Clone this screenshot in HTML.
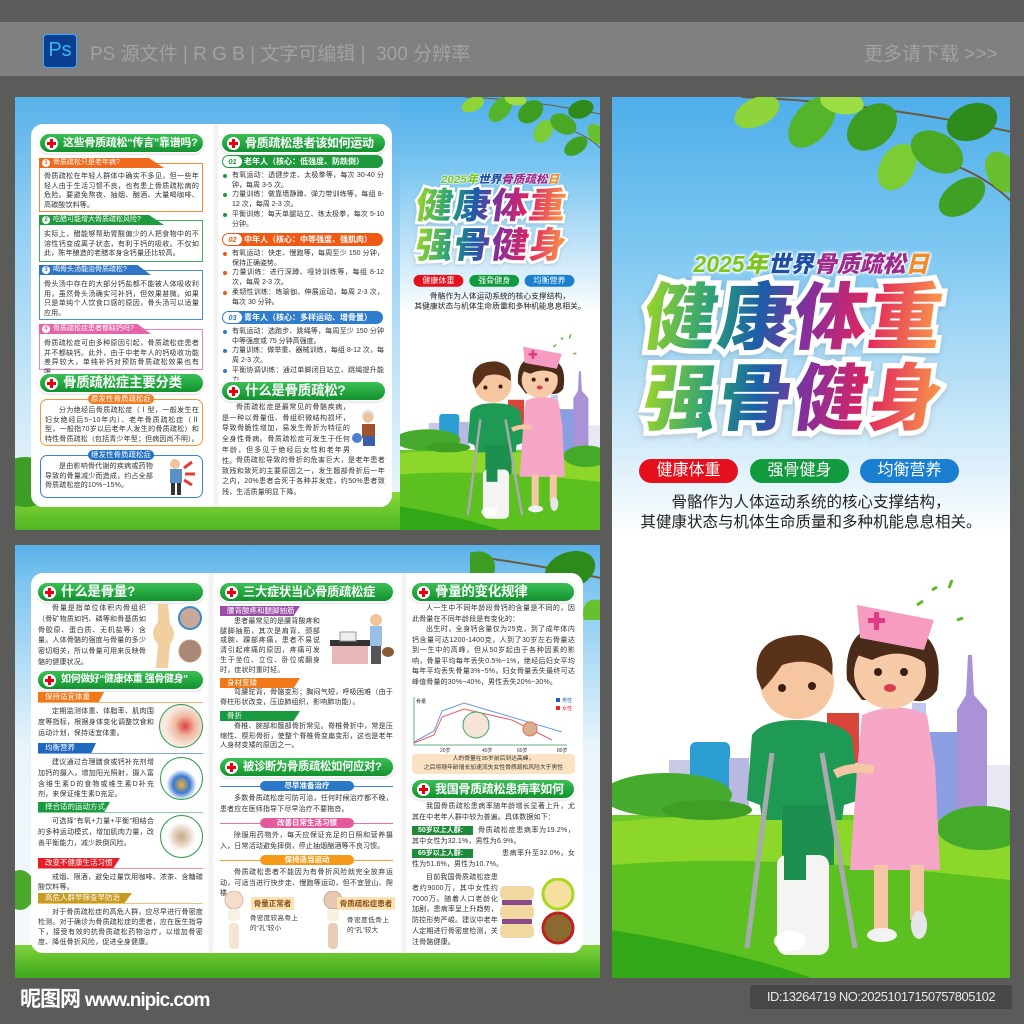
<!DOCTYPE html>
<html><head><meta charset="utf-8">
<style>
*{margin:0;padding:0;box-sizing:border-box}
body{width:1024px;height:1024px;background:#5b5b5a;position:relative;overflow:hidden;font-family:"Liberation Sans","Noto Sans CJK SC",sans-serif}
.a{position:absolute}
.t{position:absolute;font-size:7px;line-height:9.7px;color:#333;text-align:justify;letter-spacing:.15px}
.t p{text-indent:2em}
.hd{position:absolute;height:18px;border-radius:9px;background:linear-gradient(#3bbf55,#12912f);color:#fff;font-weight:bold;font-size:13px;line-height:18px;padding-left:23px;box-shadow:0 0 0 1.5px #fff,0 1px 2px 1.5px rgba(0,0,0,.15);white-space:nowrap;overflow:hidden;letter-spacing:-.3px}
.x{position:absolute;left:5px;top:2.5px;width:13px;height:13px;border-radius:50%;background:#fff}
.x:before,.x:after{content:"";position:absolute;background:#e60012}
.x:before{left:5px;top:2px;width:3px;height:9px}
.x:after{left:2px;top:5px;width:9px;height:3px}
.box{position:absolute;background:#fff;border:1.5px solid}
.tab{position:absolute;height:10px;color:#fff;font-size:7px;line-height:10px;padding-left:14px;clip-path:polygon(0 0,88% 0,100% 100%,0 100%);white-space:nowrap}
.tab b{position:absolute;left:3px;top:1px;width:8px;height:8px;border-radius:50%;background:#fff;font-size:6px;line-height:8px;text-align:center}
.bar{position:absolute;height:13px;border-radius:7px;color:#fff;font-size:8px;line-height:13px;padding-left:22px;white-space:nowrap;font-weight:bold}
.bar i{position:absolute;left:1px;top:1px;width:19px;height:11px;border-radius:6px;background:#fff;font-size:7.5px;line-height:11px;text-align:center;font-style:italic}
.ul{position:absolute;font-size:7px;line-height:9.7px;color:#333;text-align:justify}
.ul div{padding-left:10px;position:relative}
.ul div:before{content:"";position:absolute;left:1px;top:3px;width:4px;height:4px;border-radius:50%;background:var(--c)}
.st{position:absolute;height:10px;color:#fff;font-size:7.5px;line-height:10px;padding-left:7px;clip-path:polygon(0 0,100% 0,92% 100%,0 100%);white-space:nowrap}
.sl{position:absolute;height:1px}
.cp{position:absolute;height:10px;border-radius:5px;color:#fff;font-size:8px;line-height:10px;text-align:center}
.pl{position:absolute;height:10px;border-radius:5px;color:#fff;font-size:7.5px;line-height:10px;text-align:center;font-weight:bold}
.cov{position:absolute;width:398px;height:881px;overflow:hidden;background:linear-gradient(180deg,#4eaee9 0,#7cc7f1 150px,#c7e6f8 320px,#fff 440px,#fff 900px)}
.sub{position:absolute;left:0;width:398px;top:148px;text-align:center;font-size:23px;font-weight:900;font-style:italic;text-shadow:0 0 3px #fff,0 0 3px #fff,0 0 3px #fff,0 0 3px #fff;white-space:nowrap}
.big{position:absolute;left:32px;font-size:73px;font-weight:900;line-height:80px;white-space:nowrap;letter-spacing:2px;transform:skewX(-8deg)}
.big .o{position:absolute;left:0;top:0;color:#fff;-webkit-text-stroke:10px #fff;filter:drop-shadow(0 2px 3px rgba(0,0,0,.15))}
.big .g{position:relative;background:linear-gradient(90deg,#9ad52a 0%,#2aa07a 22%,#1c5fa8 38%,#8a2e9a 55%,#e0255e 75%,#fb9e48 100%);-webkit-background-clip:text;background-clip:text;color:transparent}
.pill{position:absolute;top:362px;height:24px;width:99px;border-radius:12px;color:#fff;font-size:16px;line-height:24px;text-align:center}
.cl{position:absolute;left:0;width:398px;text-align:center;font-size:15.5px;color:#222;line-height:20px}
</style></head><body>

<svg width="0" height="0" style="position:absolute">
<defs>
<symbol id="ill" viewBox="0 0 398 418">
 <rect x="0" y="255" width="398" height="163" fill="#6cc928"/>
 <path d="M0 262 Q120 250 260 262 L398 270 L398 418 L0 418Z" fill="#8dd62a"/>
 <path d="M0 305 Q150 292 398 320 L398 418 L0 418Z" fill="#5cc020"/>
 <path d="M0 370 Q120 390 200 418 L0 418Z" fill="#32a818"/>
 <rect x="57" y="200" width="22" height="50" fill="#c9c9e6"/>
 <rect x="78" y="182" width="40" height="66" rx="6" fill="#2b9fd2"/>
 <rect x="117" y="198" width="20" height="50" fill="#b8b8e0"/>
 <rect x="215" y="153" width="32" height="50" fill="#d8453a"/>
 <rect x="300" y="143" width="14" height="110" fill="#c0c8f0"/>
 <rect x="313" y="172" width="33" height="88" fill="#8c9ee2"/>
 <path d="M356 95 L360 95 L362 135 L375 150 L375 258 L345 258 L345 150 L354 135Z" fill="#a993d6"/>
 <rect x="375" y="205" width="23" height="50" fill="#e8e8f2"/>
 <ellipse cx="55" cy="235" rx="65" ry="22" fill="#46ab2c"/>
 <ellipse cx="95" cy="250" rx="45" ry="10" fill="#3e9e26"/>
 <ellipse cx="370" cy="268" rx="45" ry="22" fill="#44aa2a"/>
 <path d="M140 175 Q150 160 185 160 Q230 160 240 178 L248 240 L232 245 L230 260 L150 260 L148 245 L135 240Z" fill="#1f9a55"/>
 <rect x="170" y="245" width="52" height="60" fill="#1d8f4e"/>
 <rect x="165" y="295" width="52" height="100" rx="10" fill="#f4f4f2"/>
 <ellipse cx="178" cy="381" rx="16" ry="10" fill="#fff"/>
 <rect x="172" y="250" width="22" height="70" fill="#1d8f4e"/>
 <circle cx="185" cy="122" r="37" fill="#f6c6a0"/>
 <path d="M145 118 Q140 75 190 75 Q225 80 220 115 Q200 95 170 105 Q160 120 150 130Z" fill="#5a3219"/>
 <circle cx="170" cy="128" r="4" fill="#3a1f10"/><circle cx="200" cy="126" r="4" fill="#3a1f10"/>
 <line x1="160" y1="193" x2="135" y2="388" stroke="#a9a9b0" stroke-width="5"/>
 <line x1="210" y1="193" x2="243" y2="388" stroke="#a9a9b0" stroke-width="5"/>
 <path d="M250 155 Q285 140 315 155 L323 205 L328 310 L238 310 L245 210Z" fill="#f5a5c6"/>
 <rect x="262" y="305" width="14" height="65" fill="#f4c6a4"/><rect x="298" y="305" width="14" height="55" fill="#f4c6a4"/>
 <ellipse cx="270" cy="375" rx="15" ry="7" fill="#f2f2f2"/><ellipse cx="307" cy="365" rx="8" ry="14" fill="#e6e6ea"/>
 <path d="M235 120 Q230 60 285 65 Q335 70 325 130 Q315 145 300 140 L250 140Z" fill="#4a2a18"/>
 <ellipse cx="278" cy="113" rx="36" ry="36" fill="#f7cba8"/>
 <path d="M245 95 Q260 72 300 78 Q318 90 316 105 Q290 85 260 100Z" fill="#4a2a18"/>
 <path d="M245 45 L322 60 L312 90 L248 78Z" fill="#f59cc0"/>
 <rect x="262" y="52" width="5" height="18" fill="#e03a82"/><rect x="256" y="58" width="17" height="5" fill="#e03a82"/>
 <circle cx="266" cy="112" r="4" fill="#3a1f10"/><circle cx="292" cy="112" r="4" fill="#3a1f10"/>
 <ellipse cx="278" cy="128" rx="6" ry="4" fill="#d84050"/>
 <path d="M223 214 Q240 205 262 210" stroke="#f4c6a4" stroke-width="9" fill="none"/>
 <path d="M305 45 l6 -4 M320 30 l5 -3 M340 20 l-3 8 M345 60 l6 -2" stroke="#5cb82a" stroke-width="3"/>
</symbol>
<symbol id="leaf" viewBox="0 0 290 150">
 <path d="M20 5 Q150 10 290 40" stroke="#6b5a3a" stroke-width="2" fill="none"/>
 <path d="M180 60 Q250 70 290 110" stroke="#6b5a3a" stroke-width="2" fill="none"/>
 <ellipse cx="35" cy="20" rx="24" ry="14" fill="#8fd43a" transform="rotate(-25 35 20)"/>
 <ellipse cx="90" cy="30" rx="30" ry="18" fill="#54b52a" transform="rotate(-50 90 30)"/>
 <ellipse cx="150" cy="35" rx="28" ry="20" fill="#3d9c22" transform="rotate(-40 150 35)"/>
 <ellipse cx="175" cy="75" rx="25" ry="17" fill="#7bcc35" transform="rotate(-60 175 75)"/>
 <ellipse cx="215" cy="60" rx="28" ry="19" fill="#4aa824" transform="rotate(30 215 60)"/>
 <ellipse cx="250" cy="30" rx="26" ry="18" fill="#2f8a1c" transform="rotate(-20 250 30)"/>
 <ellipse cx="240" cy="105" rx="26" ry="16" fill="#3fa023" transform="rotate(-35 240 105)"/>
 <ellipse cx="280" cy="80" rx="22" ry="15" fill="#68c02e" transform="rotate(60 280 80)"/>
 <ellipse cx="120" cy="10" rx="22" ry="12" fill="#9ede45" transform="rotate(10 120 10)"/>
</symbol>
</defs></svg>

<div class="a" style="left:0;top:22px;width:1024px;height:54px;background:#808080"></div>
<div class="a" style="left:43px;top:34px;width:34px;height:34px;border-radius:4px;background:#0a3e8e;border:1.5px solid #36a8ff;color:#3fb2ff;font-size:20px;line-height:30px;text-align:center">Ps</div>
<div class="a" style="left:90px;top:39px;font-size:19px;color:#a2a2a2;white-space:nowrap">PS 源文件 | R G B | 文字可编辑 |&nbsp; 300 分辨率</div>
<div class="a" style="left:864px;top:39px;font-size:19px;color:#a2a2a2;white-space:nowrap">更多请下载 &gt;&gt;&gt;</div>

<!-- TOP-LEFT PANEL -->
<div class="a" style="left:15px;top:97px;width:585px;height:433px;overflow:hidden;background:linear-gradient(180deg,#58b2ea 0,#8fcdf2 120px,#d4ecfa 330px,#e8f4fb 400px,#7ccf38 430px,#3fae1c 433px)">
 <div class="a" style="left:0;top:395px;width:585px;height:40px;background:linear-gradient(#8ad83a,#4cb422)"></div>
 <div class="a" style="left:-20px;top:360px;width:60px;height:50px;border-radius:50%;background:#3c9e24"></div>
</div>
<div class="a" style="left:31px;top:124px;width:361px;height:383px;border-radius:12px;background:#fff"></div>
<div class="a" style="left:212px;top:124px;width:8px;height:383px;background:linear-gradient(90deg,#fff,#efefef,#fff)"></div>

<div class="hd" style="left:40px;top:134px;width:163px;font-size:11px"><i class="x"></i>这些骨质疏松“传言”靠谱吗?</div>

<div class="box" style="left:39px;top:163px;width:164px;height:49px;border-color:#f28b3a"></div>
<div class="tab" style="left:39px;top:158px;width:125px;background:#ef6a1c"><b style="color:#ef6a1c">1</b>骨质疏松只是老年病?</div>
<div class="t" style="left:44px;top:172px;width:155px">骨质疏松在年轻人群体中确实不多见，但一些年轻人由于生活习惯不良，也有患上骨质疏松病的危险。要避免熬夜、抽烟、酗酒、大量喝咖啡、高碳酸饮料等。</div>

<div class="box" style="left:39px;top:220px;width:164px;height:42px;border-color:#3fb25a"></div>
<div class="tab" style="left:39px;top:215px;width:125px;background:#1f9b3d"><b style="color:#1f9b3d">2</b>吃醋可能增大骨质疏松风险?</div>
<div class="t" style="left:44px;top:230px;width:155px">实际上，醋能够帮助胃酸偏少的人把食物中的不溶性钙变成离子状态，有利于钙的吸收。不仅如此，陈年酿造的老醋本身含钙量还比较高。</div>

<div class="box" style="left:39px;top:270px;width:164px;height:50px;border-color:#4a8fd8"></div>
<div class="tab" style="left:39px;top:265px;width:112px;background:#2f75c6"><b style="color:#2f75c6">3</b>喝骨头汤能治骨质疏松?</div>
<div class="t" style="left:44px;top:280px;width:155px">骨头汤中存在的大部分钙盐都不能被人体吸收利用，虽然骨头汤确实可补钙，但效果甚微。如果只是单纯个人饮食口感的原因，骨头汤可以适量应用。</div>

<div class="box" style="left:39px;top:329px;width:164px;height:41px;border-color:#ee82b8"></div>
<div class="tab" style="left:39px;top:324px;width:112px;background:#e566a8"><b style="color:#e566a8">4</b>骨质疏松症患者都缺钙吗?</div>
<div class="t" style="left:44px;top:339px;width:155px">骨质疏松症可由多种原因引起，骨质疏松症患者并不都缺钙。此外，由于中老年人的钙吸收功能差异较大，单纯补钙对预防骨质疏松效果也有限。</div>

<div class="hd" style="left:40px;top:374px;width:163px;font-size:13.5px"><i class="x"></i>骨质疏松症主要分类</div>
<div class="box" style="left:40px;top:399px;width:163px;height:47px;border-color:#f5963a;border-radius:7px"></div>
<div class="cp" style="left:88px;top:394px;width:66px;background:#f07d22;font-size:7.5px">原发性骨质疏松症</div>
<div class="t" style="left:45px;top:406px;width:154px"><p>分为绝经后骨质疏松症（Ⅰ型，一般发生在妇女绝经后5~10年内）、老年骨质疏松症（Ⅱ型，一般指70岁以后老年人发生的骨质疏松）和特性骨质疏松（包括青少年型；但病因尚不明）。</p></div>
<div class="box" style="left:40px;top:455px;width:163px;height:43px;border-color:#3a84d2;border-radius:7px"></div>
<div class="cp" style="left:88px;top:450px;width:66px;background:#1f6fc4;font-size:7.5px">继发性骨质疏松症</div>
<div class="t" style="left:45px;top:462px;width:108px"><p>是由影响骨代谢的疾病或药物导致的骨量减少而造成，约占全部骨质疏松症的10%~15%。</p></div>
<svg class="a" style="left:160px;top:456px" width="36" height="40"><circle cx="15" cy="8" r="5" fill="#f0c49a"/><rect x="10" y="13" width="12" height="14" fill="#5b8fc8"/><rect x="11" y="27" width="4" height="12" fill="#333"/><rect x="17" y="27" width="4" height="12" fill="#333"/><path d="M24 12 l8 -6 M25 18 l10 0 M24 24 l8 5" stroke="#e83a3a" stroke-width="3"/></svg>

<div class="hd" style="left:222px;top:134px;width:163px;font-size:12px"><i class="x"></i>骨质疏松患者该如何运动</div>
<div class="bar" style="left:222px;top:155px;width:161px;background:#1e9a3c"><i style="color:#1e9a3c">01</i>老年人（核心：低强度、防跌倒）</div>
<div class="ul" style="left:222px;top:171px;width:162px;--c:#1e9a3c">
<div>有氧运动：透健步走、太极拳等，每次 30-40 分钟，每周 3-5 次。</div>
<div>力量训练：做靠墙静蹲、弹力带训练等，每组 8-12 次，每周 2-3 次。</div>
<div>平衡训练：每天单腿站立、练太极拳，每次 5-10 分钟。</div></div>
<div class="bar" style="left:222px;top:233px;width:161px;background:#ef5a14"><i style="color:#ef5a14">02</i>中年人（核心：中等强度、强肌肉）</div>
<div class="ul" style="left:222px;top:249px;width:162px;--c:#ef5a14">
<div>有氧运动：快走、慢跑等，每周至少 150 分钟，保持正确姿势。</div>
<div>力量训练：进行深蹲、哑铃训练等，每组 8-12 次，每周 2-3 次。</div>
<div>柔韧性训练：练瑜伽、伸展运动，每周 2-3 次，每次 30 分钟。</div></div>
<div class="bar" style="left:222px;top:311px;width:161px;background:#2f7dcc"><i style="color:#2f7dcc">03</i>青年人（核心：多样运动、增骨量）</div>
<div class="ul" style="left:222px;top:327px;width:162px;--c:#2f7dcc">
<div>有氧运动：选跑步、跳绳等，每周至少 150 分钟中等强度或 75 分钟高强度。</div>
<div>力量训练：做举重、器械训练，每组 8-12 次，每周 2-3 次。</div>
<div>平衡协调训练：通过单脚闭目站立、跳绳提升能力。</div></div>
<div class="hd" style="left:222px;top:382px;width:163px;font-size:13.5px"><i class="x"></i>什么是骨质疏松?</div>
<div class="t" style="left:222px;top:403px;width:128px;line-height:10.7px"><p>骨质疏松症是最常见的骨骼疾病，是一种以骨量低、骨组织微结构损坏，导致骨脆性增加，易发生骨折为特征的全身性骨病。骨质疏松症可发生于任何年龄，但多见于绝经后女性和老年男性。</p></div>
<svg class="a" style="left:350px;top:408px" width="36" height="44"><circle cx="18" cy="8" r="6" fill="#ddd"/><circle cx="18" cy="10" r="5" fill="#f0c49a"/><rect x="12" y="16" width="13" height="14" fill="#a0522d"/><rect x="13" y="28" width="12" height="10" fill="#3a5fa8"/><circle cx="7" cy="30" r="5" fill="#4a7fd0"/></svg>
<div class="t" style="left:222px;top:456px;width:163px;line-height:10.7px"><p>骨质疏松导致的骨折的危害巨大，是老年患者致残和致死的主要原因之一，发生髋部骨折后一年之内，20%患者会死于各种并发症，约50%患者致残，生活质量明显下降。</p></div>

<div class="a" style="left:400px;top:97px;width:200px;height:433px;overflow:hidden">
 <div style="transform:scale(.5025,.4915);transform-origin:0 0;position:absolute;left:0;top:0">
  <div class="cov" style="left:0;top:0">
   <svg class="a" style="left:110px;top:-5px" width="290" height="150"><use href="#leaf"/></svg>
   <div class="sub"><span style="color:#7cc520">2025年</span><span style="color:#1f4fa5">世界</span><span style="color:#9c2b8c">骨质疏松</span><span style="color:#f28c28">日</span></div>
   <div class="big" style="top:182px"><span class="o">健康体重</span><span class="g">健康体重</span></div>
   <div class="big" style="top:263px"><span class="o">强骨健身</span><span class="g">强骨健身</span></div>
   <div class="pill" style="left:27px;background:#e4101e">健康体重</div>
   <div class="pill" style="left:138px;background:#119a3e">强骨健身</div>
   <div class="pill" style="left:248px;background:#1a7fd0">均衡营养</div>
   <div class="cl" style="top:396px">骨骼作为人体运动系统的核心支撑结构，</div>
   <div class="cl" style="top:416px">其健康状态与机体生命质量和多种机能息息相关。</div>
   <svg class="a" style="left:0;top:463px" width="398" height="418"><use href="#ill"/></svg>
  </div>
 </div>
</div>

<!-- RIGHT COVER -->
<div class="cov" style="left:612px;top:97px">
 <svg class="a" style="left:110px;top:-5px" width="290" height="150"><use href="#leaf"/></svg>
 <div class="sub"><span style="color:#7cc520">2025年</span><span style="color:#1f4fa5">世界</span><span style="color:#9c2b8c">骨质疏松</span><span style="color:#f28c28">日</span></div>
 <div class="big" style="top:182px"><span class="o">健康体重</span><span class="g">健康体重</span></div>
 <div class="big" style="top:263px"><span class="o">强骨健身</span><span class="g">强骨健身</span></div>
 <div class="pill" style="left:27px;background:#e4101e">健康体重</div>
 <div class="pill" style="left:138px;background:#119a3e">强骨健身</div>
 <div class="pill" style="left:248px;background:#1a7fd0">均衡营养</div>
 <div class="cl" style="top:396px">骨骼作为人体运动系统的核心支撑结构，</div>
 <div class="cl" style="top:416px">其健康状态与机体生命质量和多种机能息息相关。</div>
 <svg class="a" style="left:0;top:463px" width="398" height="418"><use href="#ill"/></svg>
</div>

<!-- BOTTOM-LEFT PANEL -->
<div class="a" style="left:15px;top:545px;width:585px;height:433px;overflow:hidden;background:linear-gradient(180deg,#5ab2ea 0,#7fc6f0 40px,#e8f4fb 200px,#f4f9fc 380px)">
 <div class="a" style="left:0;top:400px;width:585px;height:33px;background:linear-gradient(#7fd23a,#3ca81c)"></div>
 <div class="a" style="left:-10px;top:325px;width:30px;height:40px;border-radius:50%;background:#4aa82a"></div>
 <svg class="a" style="left:455px;top:-5px" width="140" height="80" viewBox="150 0 140 80"><use href="#leaf" width="290" height="150"/></svg>
</div>
<div class="a" style="left:31px;top:573px;width:552px;height:380px;border-radius:12px;background:#fff"></div>
<div class="a" style="left:207px;top:573px;width:8px;height:380px;background:linear-gradient(90deg,#fff,#f0f0f0,#fff)"></div>
<div class="a" style="left:400px;top:573px;width:8px;height:380px;background:linear-gradient(90deg,#fff,#f0f0f0,#fff)"></div>

<div class="hd" style="left:38px;top:583px;width:165px;font-size:13.5px"><i class="x"></i>什么是骨量?</div>
<div class="t" style="left:38px;top:604px;width:108px;line-height:10.8px"><p>骨量是指单位体积内骨组织（骨矿物质如钙、磷等和骨基质如骨胶原、蛋白质、无机盐等）含量。人体骨骼的强度与骨量的多少密切相关，所以骨量可用来反映骨骼的健康状况。</p></div>
<svg class="a" style="left:148px;top:604px" width="56" height="64"><path d="M10 0 L20 0 L22 20 Q30 30 22 40 L20 64 L8 64 L10 40 Q0 30 10 18Z" fill="#f1cfa0"/><circle cx="42" cy="14" r="11" fill="#c8a898" stroke="#3a8ad0" stroke-width="2"/><circle cx="42" cy="47" r="11" fill="#a88878" stroke="#c89878" stroke-width="1"/></svg>
<div class="hd" style="left:38px;top:671px;width:165px;font-size:10px;letter-spacing:-.4px"><i class="x"></i>如何做好“健康体重 强骨健身”</div>
<div class="st" style="left:38px;top:692px;width:66px;background:#f07818">保持适宜体重</div><div class="sl" style="left:38px;top:702px;width:165px;background:#f5b070"></div>
<div class="t" style="left:38px;top:707px;width:116px;line-height:10.8px"><p>定期监测体重、体脂率、肌肉围度等指标，根据身体变化调整饮食和运动计划，保持适宜体重。</p></div>
<div class="a" style="left:159px;top:704px;width:44px;height:44px;border-radius:50%;border:1.5px solid #2a9a4a;background:radial-gradient(circle at 60% 50%,#e04040 0,#f0b8a0 30%,#f8e8e0 60%)"></div>
<div class="st" style="left:38px;top:743px;width:58px;background:#1f68c0">均衡营养</div><div class="sl" style="left:38px;top:753px;width:165px;background:#7fa8e0"></div>
<div class="t" style="left:38px;top:758px;width:116px;line-height:10.8px"><p>建议通过合理膳食或钙补充剂增加钙的摄入，增加阳光照射，摄入富含维生素D的食物或维生素D补充剂，来保证维生素D充足。</p></div>
<div class="a" style="left:160px;top:757px;width:43px;height:43px;border-radius:50%;border:1.5px solid #2a9a4a;background:radial-gradient(circle at 50% 65%,#f2b23a 0,#3a7ad0 25%,#fff 45%)"></div>
<div class="st" style="left:38px;top:802px;width:72px;background:#199a3e">择合适的运动方式</div><div class="sl" style="left:38px;top:812px;width:165px;background:#8ad09a"></div>
<div class="t" style="left:38px;top:817px;width:116px;line-height:10.8px"><p>可选择“有氧+力量+平衡”相结合的多种运动模式，增加肌肉力量，改善平衡能力，减少跌倒风险。</p></div>
<div class="a" style="left:160px;top:815px;width:43px;height:43px;border-radius:50%;border:1.5px solid #2a9a4a;background:radial-gradient(circle at 50% 50%,#c8a888 0,#e8d8c8 30%,#fff 50%)"></div>
<div class="st" style="left:38px;top:858px;width:82px;background:#e61e28">改变不健康生活习惯</div><div class="sl" style="left:38px;top:868px;width:165px;background:#f09090"></div>
<div class="t" style="left:38px;top:873px;width:165px;line-height:10px"><p>戒烟、限酒，避免过量饮用咖啡、浓茶、含糖碳酸饮料等。</p></div>
<div class="st" style="left:38px;top:893px;width:94px;background:#c89a20">高危人群早筛查早防治</div><div class="sl" style="left:38px;top:903px;width:165px;background:#e8c870"></div>
<div class="t" style="left:38px;top:908px;width:165px;line-height:10px"><p>对于骨质疏松症的高危人群，应尽早进行骨密度检测。对于确诊为骨质疏松症的患者，应在医生指导下，接受有效的抗骨质疏松药物治疗，以增加骨密度、降低骨折风险，促进全身健康。</p></div>

<div class="hd" style="left:220px;top:583px;width:173px;font-size:12.3px"><i class="x"></i>三大症状当心骨质疏松症</div>
<div class="st" style="left:220px;top:606px;width:80px;background:#9a4ea8">腰背酸疼和腿脚抽筋</div>
<div class="t" style="left:220px;top:617px;width:100px"><p>患者最常见的是腰背酸疼和腿脚抽筋，其次是肩背、颈部或腕、踝部疼痛，患者不易说清引起疼痛的原因，疼痛可发生于坐位、立位、卧位或翻身时，症状时重时轻。</p></div>
<svg class="a" style="left:330px;top:612px" width="64" height="55"><rect x="2" y="32" width="36" height="20" fill="#e8b8b8"/><rect x="0" y="28" width="40" height="6" fill="#333"/><rect x="10" y="20" width="16" height="9" fill="#eee" stroke="#999"/><circle cx="46" cy="8" r="6" fill="#f0c49a"/><rect x="40" y="14" width="12" height="20" fill="#9ac0e8"/><rect x="41" y="34" width="10" height="18" fill="#555"/><ellipse cx="58" cy="40" rx="6" ry="5" fill="#8a5a3a"/></svg>
<div class="st" style="left:220px;top:678px;width:80px;background:#f07818">身材变矮</div>
<div class="t" style="left:220px;top:688px;width:173px"><p>弯腰驼背，骨骼变形；胸闷气短，呼吸困难（由于脊柱形状改变，压迫肺组织，影响肺功能）。</p></div>
<div class="st" style="left:220px;top:711px;width:80px;background:#199a3e">骨折</div>
<div class="t" style="left:220px;top:722px;width:173px"><p>脊椎、腕部和髋部骨折常见。脊椎骨折中，常是压缩性、楔形骨折，使整个脊椎骨变扁变形，这也是老年人身材变矮的原因之一。</p></div>
<div class="hd" style="left:220px;top:758px;width:173px;font-size:11.3px"><i class="x"></i>被诊断为骨质疏松如何应对?</div>
<div class="sl" style="left:220px;top:786px;width:173px;background:#3a84d2"></div><div class="pl" style="left:260px;top:781px;width:94px;background:#2a78c8">尽早准备治疗</div>
<div class="t" style="left:220px;top:794px;width:173px;line-height:10.5px"><p>多数骨质疏松症可防可治，任何时候治疗都不晚，患者应在医师指导下尽早治疗不要拖沓。</p></div>
<div class="sl" style="left:220px;top:823px;width:173px;background:#e870a8"></div><div class="pl" style="left:260px;top:818px;width:94px;background:#e45a9c">改善日常生活习惯</div>
<div class="t" style="left:220px;top:831px;width:173px;line-height:10.5px"><p>除服用药物外，每天应保证充足的日照和营养摄入，日常活动避免摔倒，停止抽烟酗酒等不良习惯。</p></div>
<div class="sl" style="left:220px;top:860px;width:173px;background:#f5a030"></div><div class="pl" style="left:260px;top:855px;width:94px;background:#f59a18">保持适当运动</div>
<div class="t" style="left:220px;top:868px;width:173px;line-height:10.5px"><p>骨质疏松患者不能因为有骨折风险就完全放弃运动，可适当进行快步走、慢跑等运动，但不宜登山、爬楼。</p></div>
<svg class="a" style="left:220px;top:891px" width="175" height="60"><circle cx="14" cy="9" r="9" fill="#f6dccb" stroke="#d8b8a0"/><rect x="8" y="18" width="12" height="12" rx="4" fill="#f8f0e0"/><rect x="9" y="32" width="10" height="26" rx="4" fill="#f6e4d4"/><circle cx="113" cy="9" r="9" fill="#e8c8b0" stroke="#c8a890"/><rect x="107" y="18" width="12" height="12" rx="4" fill="#f8f0e0"/><rect x="108" y="32" width="10" height="26" rx="4" fill="#e8cdb8"/></svg>
<div class="a" style="left:251px;top:897px;width:43px;height:13px;background:#fbe3b6;color:#8a4a10;font-size:7.5px;line-height:13px;text-align:center;font-weight:bold">骨量正常者</div>
<div class="a" style="left:337px;top:897px;width:58px;height:13px;background:#fbe3b6;color:#8a4a10;font-size:7.5px;line-height:13px;text-align:center;font-weight:bold">骨质疏松症患者</div>
<div class="t" style="left:250px;top:914px;width:48px;font-size:6.5px">骨密度较高骨上的“孔”较小</div>
<div class="t" style="left:347px;top:916px;width:42px;font-size:6.5px">骨密度低骨上的“孔”较大</div>

<div class="hd" style="left:412px;top:583px;width:162px;font-size:13.5px"><i class="x"></i>骨量的变化规律</div>
<div class="t" style="left:412px;top:604px;width:163px;line-height:10.5px"><p>人一生中不同年龄段骨钙的含量是不同的，因此骨量在不同年龄段是有变化的：</p><p>出生时，全身钙含量仅为25克，到了成年体内钙含量可达1200-1400克，人到了30岁左右骨量达到一生中的高峰，但从50岁起由于各种因素的影响，骨量平均每年丢失0.5%~1%，绝经后妇女平均每年平均丢失骨量3%~5%，妇女骨量丢失最终可达峰值骨量的30%~40%，男性丢失20%~30%。</p></div>
<svg class="a" style="left:412px;top:695px" width="165" height="58">
 <path d="M2 2 L2 50 L155 50" stroke="#3a9a5a" fill="none" stroke-width=".8"/>
 <path d="M2 47 L22 36 L30 16 L52 8 L150 37" stroke="#6a9ae0" fill="none" stroke-width="1"/>
 <path d="M2 48 L22 40 L30 22 L52 14 L100 25 L140 45" stroke="#f05a6a" fill="none" stroke-width="1"/>
 <circle cx="64" cy="30" r="13" fill="#f6e4d8" stroke="#3aa860"/>
 <circle cx="118" cy="34" r="7" fill="#d8b090" stroke="#e8684a"/>
 <text x="4" y="8" font-size="5" fill="#333">骨量</text>
 <rect x="144" y="3" width="4" height="4" fill="#2a5ab8"/><text x="150" y="7" font-size="5" fill="#2a5ab8">男性</text>
 <rect x="144" y="11" width="4" height="4" fill="#e82828"/><text x="150" y="15" font-size="5" fill="#e82828">女性</text>
 <text x="28" y="57" font-size="5" fill="#333">20岁</text><text x="70" y="57" font-size="5" fill="#333">40岁</text><text x="105" y="57" font-size="5" fill="#333">60岁</text><text x="145" y="57" font-size="5" fill="#333">80岁</text>
</svg>
<div class="a" style="left:412px;top:754px;width:163px;height:20px;border-radius:4px;background:#fae2c2;font-size:5.8px;line-height:9px;text-align:center;color:#333;padding-top:1px">人的骨量在35岁前后到达高峰，<br>之后将随年龄增长加速流失女性骨质疏松风险大于男性</div>
<div class="hd" style="left:412px;top:780px;width:162px;font-size:12px"><i class="x"></i>我国骨质疏松患病率如何</div>
<div class="t" style="left:412px;top:802px;width:163px;line-height:10.5px"><p>我国骨质疏松患病率随年龄增长显著上升，尤其在中老年人群中较为普遍。具体数据如下：</p></div>
<div class="a" style="left:412px;top:826px;width:61px;height:9px;background:#1f8a3a;color:#fff;font-size:7px;line-height:9px;padding-left:6px;font-weight:bold">50岁以上人群:</div>
<div class="t" style="left:412px;top:826px;width:163px;line-height:10.5px;text-indent:66px">骨质疏松症患病率为19.2%，其中女性为32.1%，男性为6.9%。</div>
<div class="a" style="left:412px;top:849px;width:61px;height:9px;background:#1f8a3a;color:#fff;font-size:7px;line-height:9px;padding-left:6px;font-weight:bold">65岁以上人群:</div>
<div class="t" style="left:412px;top:849px;width:163px;line-height:10.5px;text-indent:90px">患病率升至32.0%，女性为51.6%，男性为10.7%。</div>
<div class="t" style="left:412px;top:873px;width:86px;line-height:10.8px"><p>目前我国骨质疏松症患者约9000万，其中女性约7000万。随着人口老龄化加剧，患病率呈上升趋势，防控形势严峻。建议中老年人定期进行骨密度检测，关注骨骼健康。</p></div>
<svg class="a" style="left:498px;top:878px" width="80" height="70">
 <rect x="2" y="8" width="34" height="14" rx="5" fill="#f0d8a0"/><rect x="4" y="22" width="30" height="5" fill="#8a4a8a"/>
 <rect x="2" y="27" width="34" height="14" rx="5" fill="#f0d8a0"/><rect x="4" y="41" width="30" height="5" fill="#8a4a8a"/>
 <rect x="2" y="46" width="34" height="14" rx="5" fill="#f0d8a0"/>
 <circle cx="60" cy="16" r="15" fill="#f6e0a0" stroke="#a8d820" stroke-width="3"/>
 <circle cx="60" cy="50" r="15" fill="#8a6a30" stroke="#c02020" stroke-width="3"/>
</svg>

<div class="a" style="left:20px;top:983px;font-size:21px;font-weight:bold;color:#fff;white-space:nowrap;letter-spacing:-1px">昵图网 <span style="font-size:19px">www.nipic.com</span></div>
<div class="a" style="left:750px;top:985px;width:262px;height:24px;background:#474747;border-radius:2px;color:#e8e8e8;font-size:13px;line-height:24px;text-align:center;white-space:nowrap;letter-spacing:-.5px">ID:13264719 NO:20251017150757805102</div>
</body></html>
